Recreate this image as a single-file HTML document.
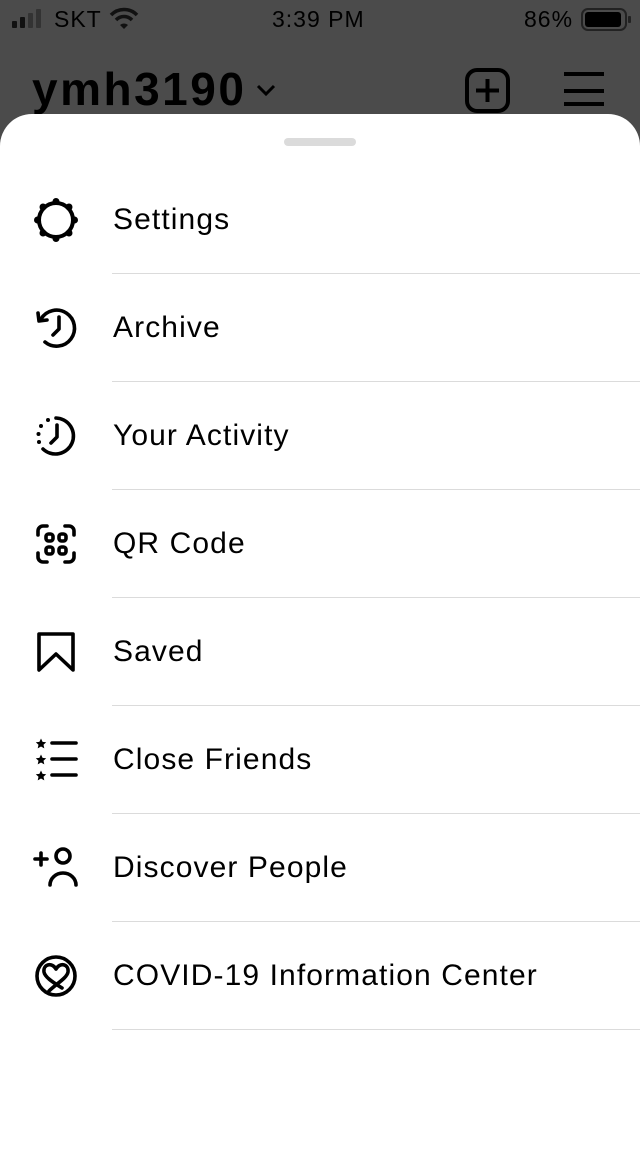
<!DOCTYPE html>
<html><head><meta charset="utf-8"><style>
html,body{margin:0;padding:0;}
body{width:640px;height:1136px;background:#4b4b4b;position:relative;overflow:hidden;font-family:"Liberation Sans",sans-serif;}
.st{position:absolute;top:6px;font-size:23px;color:#000;letter-spacing:1px;}
.sheet{position:absolute;left:0;top:114px;width:640px;height:1040px;background:#fff;border-radius:32px 32px 0 0;}
.handle{position:absolute;left:284px;top:138px;width:72px;height:8px;border-radius:4px;background:#dbdbdb;}
.row{position:absolute;left:0;width:640px;height:108px;}
.row .t{position:absolute;left:113px;top:0;line-height:108px;font-size:30px;letter-spacing:1.1px;color:#000;}
.row .d{position:absolute;left:112px;right:0;bottom:0;height:1px;background:#dbdbdb;}
.row svg{position:absolute;left:26px;top:24px;}
</style></head><body>
<svg width="640" height="40" style="position:absolute;left:0;top:0">
<rect x="12" y="21" width="5" height="7" rx="1" fill="#111"/>
<rect x="20" y="17" width="5" height="11" rx="1" fill="#111"/>
<rect x="28" y="13" width="5" height="15" rx="1" fill="#333"/>
<rect x="36" y="9" width="5" height="19" rx="1" fill="#333"/>
<path d="M111 15 A18 18 0 0 1 137 15" stroke="#111" stroke-width="3.5" fill="none"/>
<path d="M116 20 A11 11 0 0 1 132 20" stroke="#111" stroke-width="3.5" fill="none"/>
<path d="M120 25 L124 29 L128 25 A6 6 0 0 0 120 25Z" fill="#111"/>
<rect x="582" y="9" width="44" height="21" rx="6" stroke="#222" stroke-width="2" fill="none"/>
<rect x="585" y="12" width="36" height="15" rx="3" fill="#000"/>
<rect x="628" y="16" width="3" height="7" rx="1" fill="#222"/>
</svg>
<div class="st" style="left:54px">SKT</div>
<div class="st" style="left:272px">3:39 PM</div>
<div class="st" style="left:524px">86%</div>
<div style="position:absolute;left:32px;top:62px;font-size:46px;font-weight:bold;color:#000;letter-spacing:2.5px">ymh3190</div>
<svg width="640" height="114" style="position:absolute;left:0;top:0">
<path d="M258 86 L266 94 L274 86" stroke="#000" stroke-width="3" fill="none"/>
<rect x="467" y="70" width="41" height="41" rx="10" stroke="#000" stroke-width="4" fill="none"/>
<path d="M487.5 79 V102 M476 90.5 H499" stroke="#000" stroke-width="4"/>
<path d="M564 74 H604 M564 91 H604 M564 104 H604" stroke="#000" stroke-width="4"/>
</svg>
<div class="sheet"></div>
<div class="handle"></div>

<div class="row" style="top:166px"><svg width="60" height="60" viewBox="0 0 60 60"><circle cx="30" cy="30" r="17" stroke="#000" stroke-width="4" fill="none"/><g fill="#000"><circle cx="30" cy="11.5" r="3.5"/><circle cx="30" cy="48.5" r="3.5"/><circle cx="11.5" cy="30" r="3.5"/><circle cx="48.5" cy="30" r="3.5"/><circle cx="17" cy="17" r="3.5"/><circle cx="43" cy="17" r="3.5"/><circle cx="17" cy="43" r="3.5"/><circle cx="43" cy="43" r="3.5"/></g></svg><div class="t">Settings</div><div class="d"></div></div>

<div class="row" style="top:274px"><svg width="60" height="60" viewBox="0 0 60 60"><path d="M15 21 A18 18 0 1 1 19 44" stroke="#000" stroke-width="3.6" fill="none" stroke-linecap="round"/><path d="M12 15 L13 23 L21 22" stroke="#000" stroke-width="3.6" fill="none" stroke-linecap="round" stroke-linejoin="round"/><path d="M33 19 V31 L27 37" stroke="#000" stroke-width="3.6" fill="none" stroke-linecap="round" stroke-linejoin="round"/></svg><div class="t">Archive</div><div class="d"></div></div>

<div class="row" style="top:382px"><svg width="60" height="60" viewBox="0 0 60 60"><path d="M30 12 A18 18 0 1 1 17 43" stroke="#000" stroke-width="3.6" fill="none" stroke-linecap="round"/><g fill="#000"><circle cx="22" cy="14" r="2"/><circle cx="15" cy="20" r="2"/><circle cx="12.5" cy="28" r="2"/><circle cx="13" cy="36" r="2"/></g><path d="M31 19 V31 L25 37" stroke="#000" stroke-width="3.6" fill="none" stroke-linecap="round" stroke-linejoin="round"/></svg><div class="t">Your Activity</div><div class="d"></div></div>

<div class="row" style="top:490px"><svg width="60" height="60" viewBox="0 0 60 60"><g stroke="#000" stroke-width="3.6" fill="none" stroke-linecap="round"><path d="M12 21 V17 A5 5 0 0 1 17 12 H21"/><path d="M39 12 H43 A5 5 0 0 1 48 17 V21"/><path d="M48 39 V43 A5 5 0 0 1 43 48 H39"/><path d="M21 48 H17 A5 5 0 0 1 12 43 V39"/><rect x="20" y="20" width="7" height="7" rx="2.5"/><rect x="33" y="20" width="7" height="7" rx="2.5"/><rect x="20" y="33" width="7" height="7" rx="2.5"/><rect x="33" y="33" width="7" height="7" rx="2.5"/></g></svg><div class="t">QR Code</div><div class="d"></div></div>

<div class="row" style="top:598px"><svg width="60" height="60" viewBox="0 0 60 60"><path d="M13 12 H47 V48 L30 32 L13 48 Z" stroke="#000" stroke-width="3.6" fill="none" stroke-linejoin="round"/></svg><div class="t">Saved</div><div class="d"></div></div>

<div class="row" style="top:706px"><svg width="60" height="60" viewBox="0 0 60 60"><g fill="#000"><path d="M15 8.5 l1.6 3.4 3.6.4 -2.7 2.5 .8 3.6 -3.3-1.9 -3.3 1.9 .8-3.6 -2.7-2.5 3.6-.4z"/><path d="M15 24.5 l1.6 3.4 3.6.4 -2.7 2.5 .8 3.6 -3.3-1.9 -3.3 1.9 .8-3.6 -2.7-2.5 3.6-.4z"/><path d="M15 40.5 l1.6 3.4 3.6.4 -2.7 2.5 .8 3.6 -3.3-1.9 -3.3 1.9 .8-3.6 -2.7-2.5 3.6-.4z"/></g><path d="M26 13 H50 M26 29 H50 M26 45 H50" stroke="#000" stroke-width="3.6" stroke-linecap="round"/></svg><div class="t">Close Friends</div><div class="d"></div></div>

<div class="row" style="top:814px"><svg width="60" height="60" viewBox="0 0 60 60"><g stroke="#000" stroke-width="3.6" fill="none" stroke-linecap="round"><path d="M15 15 V27 M9 21 H21"/><circle cx="37" cy="18" r="7"/><path d="M24 47 A13 12 0 0 1 50 47"/></g></svg><div class="t">Discover People</div><div class="d"></div></div>

<div class="row" style="top:922px"><svg width="60" height="60" viewBox="0 0 60 60"><g stroke="#000" stroke-width="3.6" fill="none" stroke-linecap="round" stroke-linejoin="round"><circle cx="30" cy="30" r="19"/><path d="M30 23 C26 16 17 18 18 26 C19 32 30 38 36 42 M30 23 C34 16 43 18 42 26 C41 32 30 38 23 45"/></g></svg><div class="t">COVID-19 Information Center</div><div class="d"></div></div>
</body></html>
